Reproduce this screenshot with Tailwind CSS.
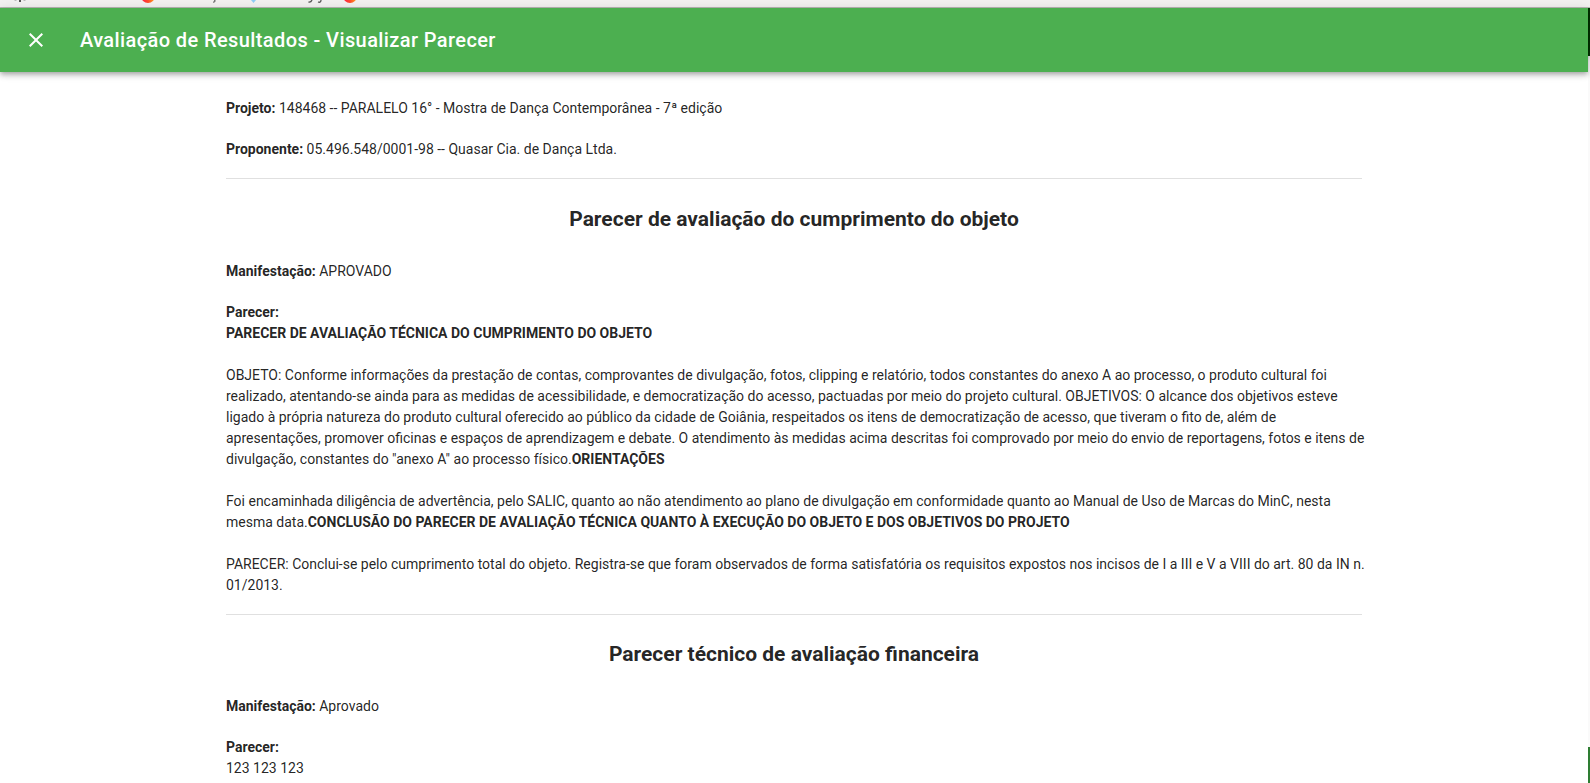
<!DOCTYPE html>
<html lang="pt-BR">
<head>
<meta charset="utf-8">
<title>Avaliação de Resultados - Visualizar Parecer</title>
<script src="https://cdn.jsdelivr.net/npm/@tailwindcss/browser@4"></script>
</head>
<body class="h-screen overflow-hidden flex flex-col bg-[#fafafa] font-[Roboto,sans-serif] text-sm/[21px] text-black/87">
  <!-- lower edge of the bookmarks bar -->
  <div class="h-2 shrink-0 overflow-hidden bg-[#f2f1f0] border-b border-[#b9b7b5]" aria-hidden="true">
    <svg class="block w-[400px] h-[7px]" viewBox="0 0 400 7">
      <defs><linearGradient id="fox"><stop offset="0" stop-color="#ff1f4f"/><stop offset=".5" stop-color="#ff4a2a"/><stop offset="1" stop-color="#ffa51e"/></linearGradient></defs>
      <path d="M15.500 0v1M24.500 0v1" stroke="#bbb" stroke-width="2"/>
      <path d="M20 0v2" stroke="#555" stroke-width="2"/>
      <circle cx="148" cy="-4" r="7" fill="url(#fox)"/>
      <path d="M214 0q2 .5 1 1.500t-2 .5" stroke="#555" fill="none"/>
      <path d="M251 0h5l-2.500 3z" fill="#8fcdf5"/>
      <path d="M312 0q-1 2.500-3.500 2M321 0q0 3-3 2" stroke="#555" fill="none" stroke-width="1.300"/>
      <circle cx="350" cy="-4" r="7" fill="url(#fox)"/>
    </svg>
  </div>
  <div class="flex flex-1 min-h-0">
    <div class="flex-1 min-w-0 flex flex-col bg-white">
      <header class="relative h-16 shrink-0 flex items-center bg-[#4caf50] text-white pl-6 shadow-[0_2px_4px_-1px_rgba(0,0,0,.2),0_4px_5px_0_rgba(0,0,0,.14),0_1px_10px_0_rgba(0,0,0,.12)]">
        <button type="button" aria-label="Fechar" class="size-6">
          <svg class="size-6" viewBox="0 0 24 24" fill="currentColor"><path d="M19 6.410 17.590 5 12 10.590 6.410 5 5 6.410 10.590 12 5 17.590 6.410 19 12 13.410 17.590 19 19 17.590 13.410 12z"/></svg>
        </button>
        <h1 class="ml-8 text-xl font-medium tracking-[.02em]">Avaliação de Resultados - Visualizar Parecer</h1>
      </header>
      <main class="w-full max-w-[1184px] mx-auto px-6 pt-[26px]">
        <section class="flex flex-col gap-5">
          <p><b>Projeto:</b> 148468 -- PARALELO 16° - Mostra de Dança Contemporânea - 7ª edição</p>
          <p><b>Proponente:</b> 05.496.548/0001-98 -- Quasar Cia. de Dança Ltda.</p>
        </section>
        <hr class="mt-[18px] mb-6 border-black/12">
        <section class="flex flex-col gap-5">
          <h2 class="mb-1.5 text-[21px]/8 font-bold text-center">Parecer de avaliação do cumprimento do objeto</h2>
          <p><b>Manifestação:</b> APROVADO</p>
          <div class="-mr-2">
            <p><b>Parecer:</b></p>
            <p class="mb-[21px]"><b>PARECER DE AVALIAÇÃO TÉCNICA DO CUMPRIMENTO DO OBJETO</b></p>
            <p class="mb-[21px]">OBJETO: Conforme informações da prestação de contas, comprovantes de divulgação, fotos, clipping e relatório, todos constantes do anexo A ao processo, o produto cultural foi realizado, atentando-se ainda para as medidas de acessibilidade, e democratização do acesso, pactuadas por meio do projeto cultural. OBJETIVOS: O alcance dos objetivos esteve ligado à própria natureza do produto cultural oferecido ao público da cidade de Goiânia, respeitados os itens de democratização de acesso, que tiveram o fito de, além de apresentações, promover oficinas e espaços de aprendizagem e debate. O atendimento às medidas acima descritas foi comprovado por meio do envio de reportagens, fotos e itens de divulgação, constantes do "anexo A" ao processo físico.<b>ORIENTAÇÕES</b></p>
            <p class="mb-[21px]">Foi encaminhada diligência de advertência, pelo SALIC, quanto ao não atendimento ao plano de divulgação em conformidade quanto ao Manual de Uso de Marcas do MinC, nesta mesma data.<b>CONCLUSÃO DO PARECER DE AVALIAÇÃO TÉCNICA QUANTO À EXECUÇÃO DO OBJETO E DOS OBJETIVOS DO PROJETO</b></p>
            <p>PARECER: Conclui-se pelo cumprimento total do objeto. Registra-se que foram observados de forma satisfatória os requisitos expostos nos incisos de I a III e V a VIII do art. 80 da IN n. 01/2013.</p>
          </div>
        </section>
        <hr class="mt-[18px] mb-[23px] border-black/12">
        <section class="flex flex-col gap-5">
          <h2 class="mb-1.5 text-[21px]/8 font-bold text-center">Parecer técnico de avaliação financeira</h2>
          <p><b>Manifestação:</b> Aprovado</p>
          <div>
            <p><b>Parecer:</b></p>
            <p>123 123 123</p>
          </div>
        </section>
      </main>
    </div>
    <!-- sliver of the page behind the dialog -->
    <div class="w-0.5 shrink-0 flex flex-col justify-between" aria-hidden="true">
      <div class="h-12 bg-[#003300] shadow-[0_2px_4px_rgba(0,0,0,.3)]"></div>
      <div class="h-9 bg-[#2e7d32]"></div>
    </div>
  </div>
</body>
</html>
